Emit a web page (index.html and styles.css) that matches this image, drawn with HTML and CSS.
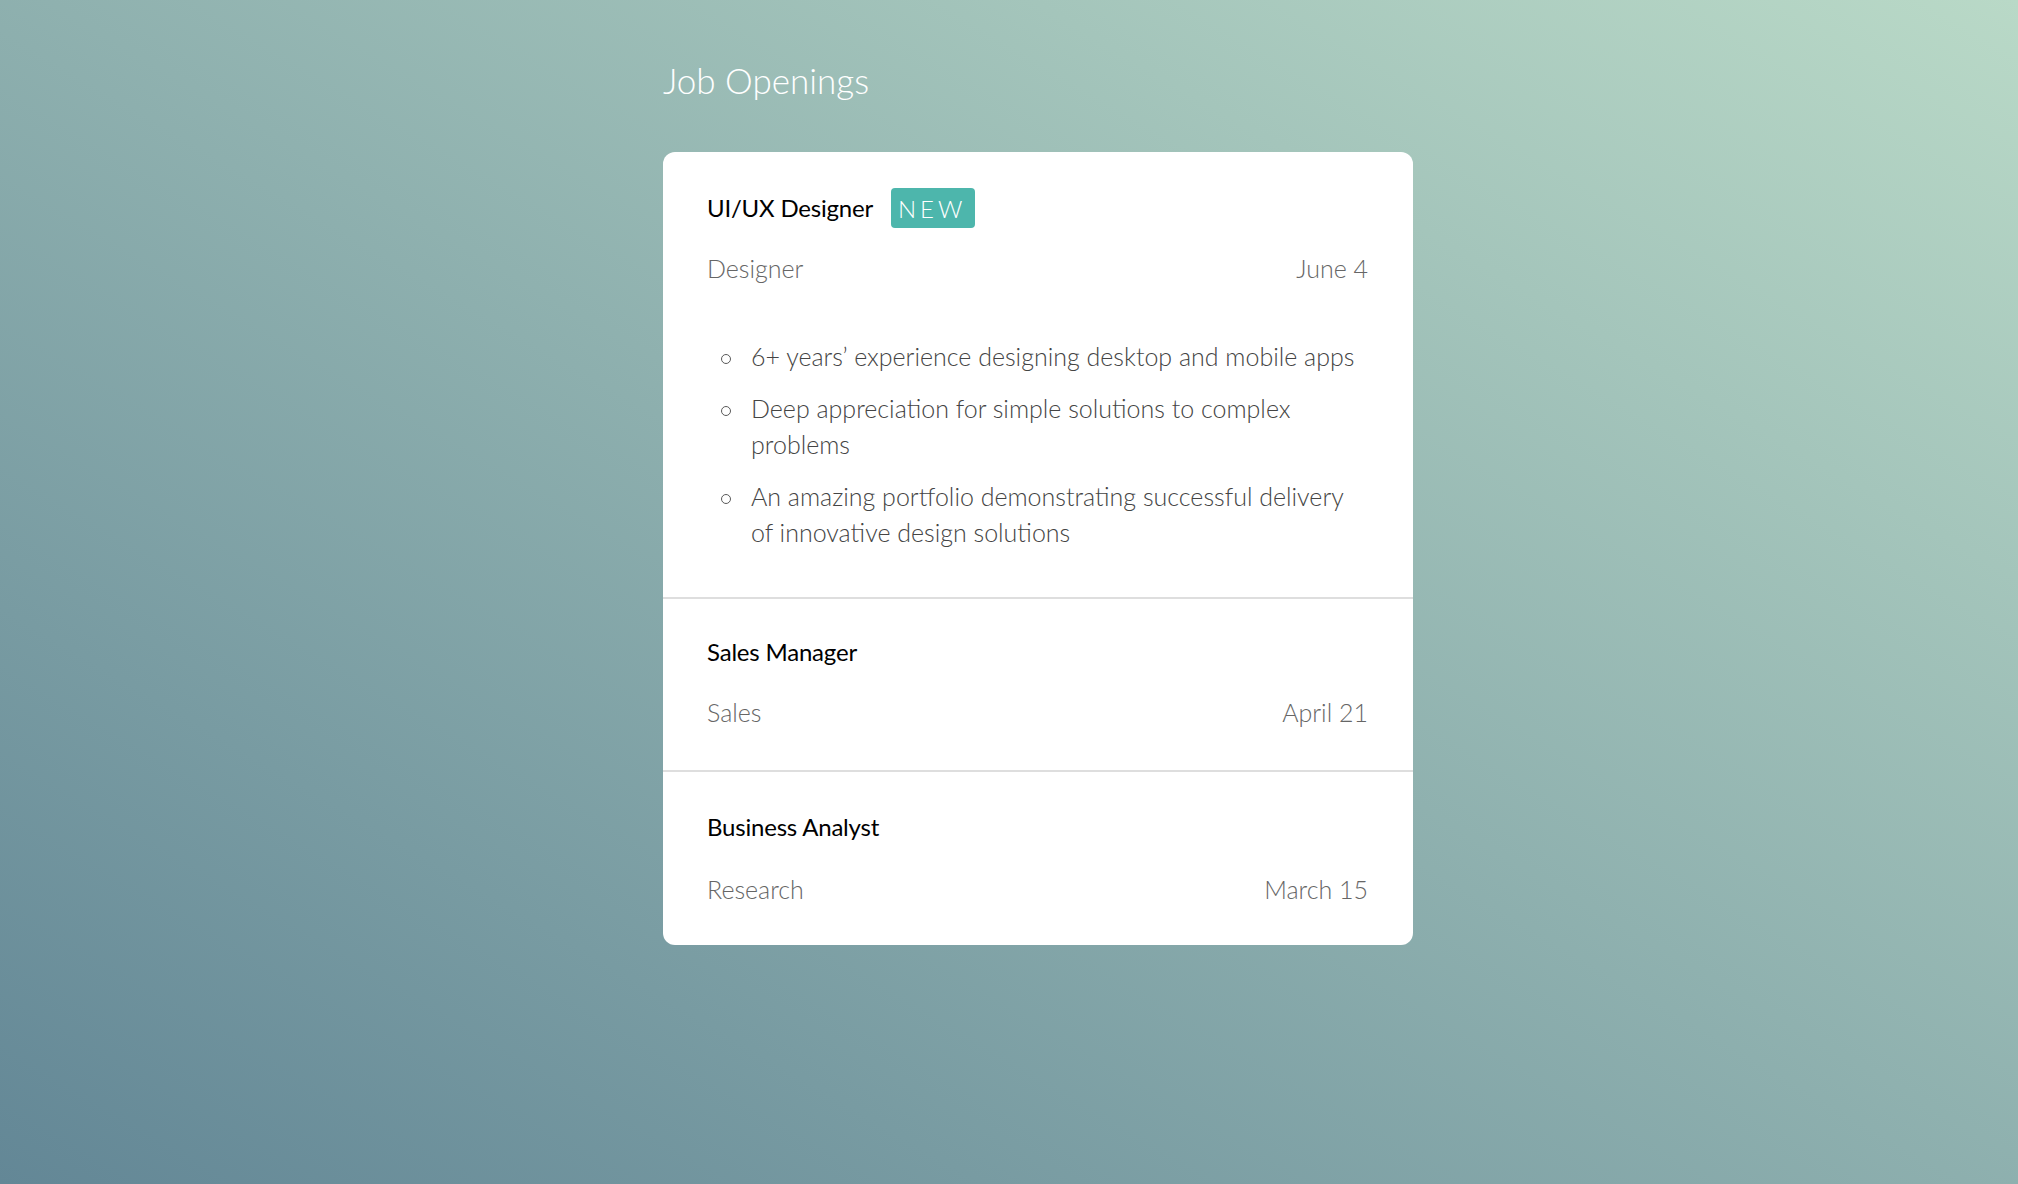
FILE: index.html
```html
<!DOCTYPE html>
<html lang="en">
<head>
<meta charset="utf-8">
<title>Job Openings</title>
<link rel="stylesheet" href="styles.css">
</head>
<body>
<main class="page">
  <h1 class="page-title">Job Openings</h1>
  <section class="card">
    <article class="job">
      <div class="job-head">
        <h2 class="job-title">UI/UX Designer</h2>
        <span class="badge">NEW</span>
      </div>
      <div class="job-meta">
        <span>Designer</span>
        <span>June 4</span>
      </div>
      <ul class="job-reqs">
        <li>6+ years’ experience designing desktop and mobile apps</li>
        <li>Deep appreciation for simple solutions to complex problems</li>
        <li>An amazing portfolio demonstrating successful delivery of innovative design solutions</li>
      </ul>
    </article>
    <article class="job">
      <div class="job-head">
        <h2 class="job-title">Sales Manager</h2>
      </div>
      <div class="job-meta">
        <span>Sales</span>
        <span>April 21</span>
      </div>
    </article>
    <article class="job">
      <div class="job-head">
        <h2 class="job-title">Business Analyst</h2>
      </div>
      <div class="job-meta">
        <span>Research</span>
        <span>March 15</span>
      </div>
    </article>
  </section>
</main>
</body>
</html>
```

FILE: styles.css
```css
* { box-sizing: border-box; }

html, body {
  margin: 0;
  height: 100%;
}

body {
  font-family: Lato, "Open Sans", "Liberation Sans", sans-serif;
  background: linear-gradient(to top right, #638796 0%, #b9d9c7 100%);
  min-height: 1184px;
}

.page {
  width: 750px;
  margin-left: calc(50% - 346px);
  padding-top: 54px;
}

.page-title {
  margin: 0 0 46px;
  font-size: 35px;
  font-weight: 300;
  color: #ffffff;
  line-height: 52px;
}

.card {
  background: #ffffff;
  border-radius: 12px;
  overflow: hidden;
}

.job {
  padding: 36px 45px 40px 44px;
}

.job + .job {
  border-top: 2px solid #dedede;
  padding-top: 33px;
  padding-bottom: 43px;
}

.job + .job:last-child {
  padding-top: 35px;
  padding-bottom: 41px;
}

.job:last-child .job-meta {
  margin-top: 27px;
}

.job-head {
  display: flex;
  align-items: center;
  min-height: 40px;
}

.job-title {
  margin: 0;
  font-size: 24px;
  font-weight: 400;
  color: #000000;
  line-height: 1.2;
  letter-spacing: -0.2px;
}

.badge {
  margin-left: 18px;
  height: 40px;
  padding: 0 9px 0 7px;
  display: flex;
  align-items: center;
  background: #4db6ac;
  color: #ffffff;
  font-size: 24px;
  font-weight: 300;
  letter-spacing: 4px;
  border-radius: 4px;
}

.job-meta {
  margin-top: 25px;
  display: flex;
  justify-content: space-between;
  font-size: 25px;
  font-weight: 300;
  color: #666666;
  line-height: 30px;
}

.job-reqs {
  list-style: none;
  margin: 55px 0 7px;
  padding: 0 0 0 14px;
  font-size: 25px;
  font-weight: 300;
  color: #444444;
  line-height: 36px;
}

.job-reqs li {
  display: flex;
  align-items: flex-start;
}

.job-reqs li + li {
  margin-top: 16px;
}

.job-reqs li::before {
  content: "";
  flex-shrink: 0;
  width: 8px;
  height: 8px;
  margin-top: 16px;
  margin-right: 20px;
  border: 1.5px solid #5a5a5a;
  border-radius: 50%;
}
```
